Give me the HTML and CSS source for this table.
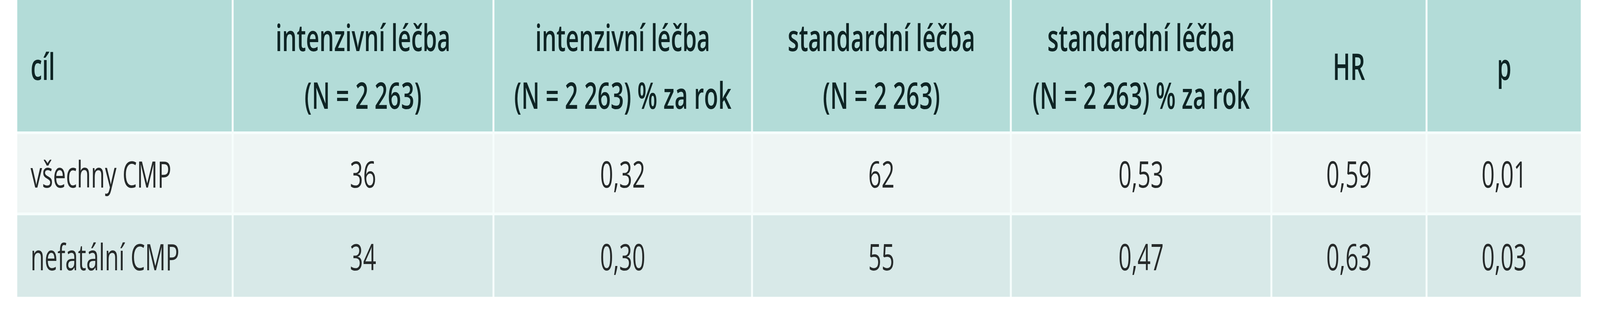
FILE: index.html
```html
<!DOCTYPE html>
<html lang="cs">
<head>
<meta charset="utf-8">
<title>Tabulka</title>
<link rel="stylesheet" href="styles.css">
</head>
<body>
<div class="viewport">
  <div class="frame">
    <div class="table">
      <div class="cell head first">cíl</div>
      <div class="cell head">intenzivní léčba<br>(N = 2 263)</div>
      <div class="cell head">intenzivní léčba<br>(N = 2 263) % za rok</div>
      <div class="cell head">standardní léčba<br>(N = 2 263)</div>
      <div class="cell head">standardní léčba<br>(N = 2 263) % za rok</div>
      <div class="cell head">HR</div>
      <div class="cell head">p</div>

      <div class="cell odd first">všechny CMP</div>
      <div class="cell odd">36</div>
      <div class="cell odd">0,32</div>
      <div class="cell odd">62</div>
      <div class="cell odd">0,53</div>
      <div class="cell odd">0,59</div>
      <div class="cell odd">0,01</div>

      <div class="cell even first">nefatální CMP</div>
      <div class="cell even">34</div>
      <div class="cell even">0,30</div>
      <div class="cell even">55</div>
      <div class="cell even">0,47</div>
      <div class="cell even">0,63</div>
      <div class="cell even">0,03</div>
    </div>
  </div>
</div>
</body>
</html>
```

FILE: styles.css
```css
html, body {
  margin: 0;
  padding: 0;
  background: #ffffff;
  overflow: hidden;
}

body {
  font-family: "Open Sans", "Liberation Sans", sans-serif;
}

.viewport {
  width: 100vw;
  height: 800px;
  overflow: hidden;
}

/* The design is drawn on a 6485px wide canvas; the browser window here is
   4096px wide, so the canvas is fitted to the window width. */
.frame {
  width: 6485px;
  height: 800px;
  transform: scaleX(0.631611);
  transform-origin: 0 0;
}

.table {
  margin-left: 70px;
  width: 6337px;
  display: grid;
  grid-template-columns: 869px 1049px 1040px 1041px 1048px 621px 621px;
  grid-template-rows: 337px 201px 209px;
  column-gap: 8px;
  row-gap: 7px;
  background: #f6fdfc;
}

.cell {
  display: flex;
  align-items: center;
  justify-content: center;
  text-align: center;
  color: #262a2a;
  font-size: 93px;
  line-height: 148px;
  white-space: nowrap;
}

.cell.first {
  justify-content: flex-start;
  text-align: left;
  padding-left: 54px;
}

.head {
  background: #b3dcd8;
  color: #0e2424;
  font-size: 94px;
  font-weight: 600;
}

.odd {
  background: #eef5f4;
}

.even {
  background: #d8e9e8;
}
```
